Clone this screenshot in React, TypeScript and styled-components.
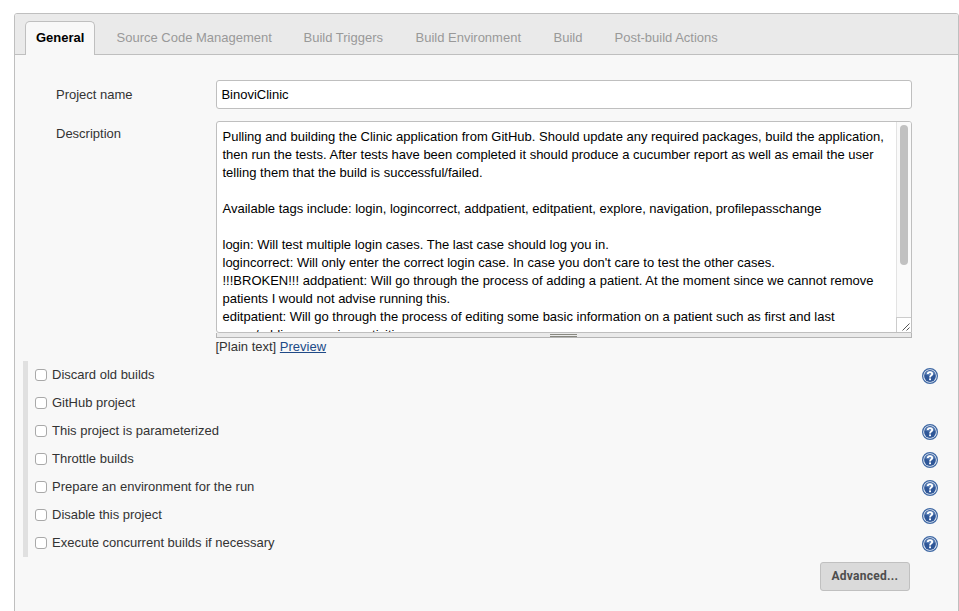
import React from "react";
import styled, { createGlobalStyle } from "styled-components";

const Global = createGlobalStyle`
  * { box-sizing: border-box; }
  html, body { margin: 0; background: #fff; overflow: hidden; }
  body { font: 13px/18px "Liberation Sans", Helvetica, Arial, sans-serif; color: #333; }
`;

const Page = styled.div`
  height: 611px;
  padding: 13px 0 0 14px;
  overflow: hidden;
`;

const Panel = styled.main`
  width: 945px;
  height: 620px;
  background: #f8f8f8;
  border: 1px solid #bfbfbf;
  border-radius: 3px 3px 0 0;
`;

const TabBar = styled.nav`
  display: flex;
  align-items: flex-end;
  height: 41px;
  padding-left: 10px;
  background: #eaeaea;
  border-bottom: 1px solid #bfbfbf;
  border-radius: 2px 2px 0 0;
`;

const Tab = styled.div<{ $active?: boolean; $width: number }>`
  width: ${(p) => p.$width}px;
  height: 34px;
  margin-bottom: -1px;
  padding: 7px 0 0 ${(p) => (p.$active ? 10 : 10.5)}px;
  border: 1px solid ${(p) => (p.$active ? "#bfbfbf" : "transparent")};
  border-bottom: 0;
  border-radius: 5px 5px 0 0;
  background: ${(p) => (p.$active ? "#f8f8f8" : "transparent")};
  color: ${(p) => (p.$active ? "#000" : "#999")};
  font-weight: ${(p) => (p.$active ? 700 : 400)};
  white-space: nowrap;
`;

const Spacer = styled.div`
  width: 10px;
`;

const Field = styled.section<{ $top: number }>`
  display: grid;
  grid-template-columns: 160px 696px;
  padding-left: 41px;
  margin-top: ${(p) => p.$top}px;
`;

const Label = styled.label<{ $top: number }>`
  padding-top: ${(p) => p.$top}px;
`;

const Input = styled.div`
  height: 29px;
  padding: 5px 4.4px;
  background: #fff;
  border: 1px solid #bfbfbf;
  border-radius: 3px;
  color: #000;
`;

const Editor = styled.div`
  display: flex;
  height: 212px;
  background: #fff;
  border: 1px solid #bfbfbf;
  border-radius: 3px 3px 0 3px;
  color: #000;
  overflow: hidden;
`;

const EditorText = styled.div`
  flex: 1;
  padding: 6px 0 0 5.5px;
  white-space: pre;
  overflow: hidden;
`;

const Line = styled.div`
  height: 18px;
`;

const Scrollbar = styled.div`
  display: flex;
  flex-direction: column;
  justify-content: space-between;
  width: 15px;
  background: #fafafa;
  border-left: 1px solid #e3e3e3;
`;

const Thumb = styled.div`
  width: 8px;
  height: 140px;
  margin: 3px 0 0 3px;
  border-radius: 4px;
  background: #c1c1c1;
`;

const Corner = styled.div`
  height: 15px;
  margin-left: -1px;
  background: #fff;
  border-top: 1px solid #ccc;
  border-left: 1px solid #ccc;
  svg { display: block; }
`;

const ResizeBar = styled.div`
  display: flex;
  flex-direction: column;
  align-items: center;
  height: 5px;
  padding: 1px 2px 0 0;
  background: #eaeaea;
  border: 1px solid #b5b5b5;
  border-top: 0;
`;

const Grip = styled.div`
  width: 27px;
  height: 3px;
  border-top: 1px solid #888880;
  border-bottom: 1px solid #888880;
`;

const Hint = styled.div`
  height: 18px;
  margin-left: -0.5px;
  a { color: #204a87; text-decoration: underline; }
`;

const Options = styled.section`
  margin: 5px 0 0 8px;
  padding-left: 7px;
  border-left: 5px solid #e0e0e0;
`;

const Option = styled.div`
  display: flex;
  align-items: center;
  height: 28px;
  width: 903px;
`;

const Check = styled.span`
  width: 12px;
  height: 12px;
  margin-right: 5px;
  background: #fff;
  border: 1px solid #a9a9a9;
  border-radius: 3px;
`;

const HelpIcon = styled.svg`
  margin: 2px 0 0 auto;
`;

const Actions = styled.div`
  display: flex;
  justify-content: flex-end;
  padding: 5px 48px 0 0;
`;

const Button = styled.div`
  width: 90px;
  height: 29px;
  padding: 4px 0 0 10.5px;
  background: #dadada;
  border: 1px solid #c0c0c0;
  border-radius: 3px;
  color: #4d4d4d;
  font: 700 12px/18px Roboto, sans-serif;
  letter-spacing: 0.25px;
`;

const tabs = [
  { name: "General", width: 70 },
  { name: "Source Code Management", width: 187, gap: true },
  { name: "Build Triggers", width: 112 },
  { name: "Build Environment", width: 138 },
  { name: "Build", width: 61 },
  { name: "Post-build Actions", width: 130 },
];

const lines = [
  "Pulling and building the Clinic application from GitHub. Should update any required packages, build the application,",
  "then run the tests. After tests have been completed it should produce a cucumber report as well as email the user",
  "telling them that the build is successful/failed.",
  "",
  "Available tags include: login, logincorrect, addpatient, editpatient, explore, navigation, profilepasschange",
  "",
  "login: Will test multiple login cases. The last case should log you in.",
  "logincorrect: Will only enter the correct login case. In case you don't care to test the other cases.",
  "!!!BROKEN!!! addpatient: Will go through the process of adding a patient. At the moment since we cannot remove",
  "patients I would not advise running this.",
  "editpatient: Will go through the process of editing some basic information on a patient such as first and last",
  "name/adding removing activities",
];

const options = [
  { name: "Discard old builds", help: true },
  { name: "GitHub project", help: false },
  { name: "This project is parameterized", help: true },
  { name: "Throttle builds", help: true },
  { name: "Prepare an environment for the run", help: true },
  { name: "Disable this project", help: true },
  { name: "Execute concurrent builds if necessary", help: true },
];

const Help = () => (
  <HelpIcon width="16" height="16" viewBox="0 0 16 16">
    <circle cx="8" cy="8" r="7.4" fill="#e8eef6" stroke="#3f68a4" strokeWidth="1.2" />
    <circle cx="8" cy="8" r="5.9" fill="#2f5798" />
    <path d="M3 6.2A5.4 5.4 0 0 1 13 6.2Q8 8.6 3 6.2Z" fill="#5f83b8" />
    <path d="M5.8 6C5.8 3.6 10.2 3.6 10.2 6C10.2 7.6 8 7.5 8 9.4" fill="none" stroke="#fff" strokeWidth="1.8" />
    <rect x="7.1" y="10.4" width="1.9" height="1.8" fill="#fff" />
  </HelpIcon>
);

export default function App() {
  return (
    <Page>
      <Global />
      <Panel>
        <TabBar>
          {tabs.map((t, i) => (
            <React.Fragment key={t.name}>
              {t.gap && <Spacer />}
              <Tab $active={i === 0} $width={t.width}>{t.name}</Tab>
            </React.Fragment>
          ))}
        </TabBar>
        <Field $top={25}>
          <Label $top={6}>Project name</Label>
          <Input>BinoviClinic</Input>
        </Field>
        <Field $top={12}>
          <Label $top={4}>Description</Label>
          <div>
            <Editor>
              <EditorText>
                {lines.map((l, i) => <Line key={i}>{l}</Line>)}
              </EditorText>
              <Scrollbar>
                <Thumb />
                <Corner>
                  <svg width="14" height="14">
                    <path d="M5.5 12.5L12.5 5.5M9.5 12.5L12.5 9.5" stroke="#555" fill="none" />
                  </svg>
                </Corner>
              </Scrollbar>
            </Editor>
            <ResizeBar><Grip /></ResizeBar>
            <Hint>[Plain text] <a>Preview</a></Hint>
          </div>
        </Field>
        <Options>
          {options.map((o) => (
            <Option key={o.name}>
              <Check />
              <span>{o.name}</span>
              {o.help && <Help />}
            </Option>
          ))}
        </Options>
        <Actions><Button>Advanced...</Button></Actions>
      </Panel>
    </Page>
  );
}
